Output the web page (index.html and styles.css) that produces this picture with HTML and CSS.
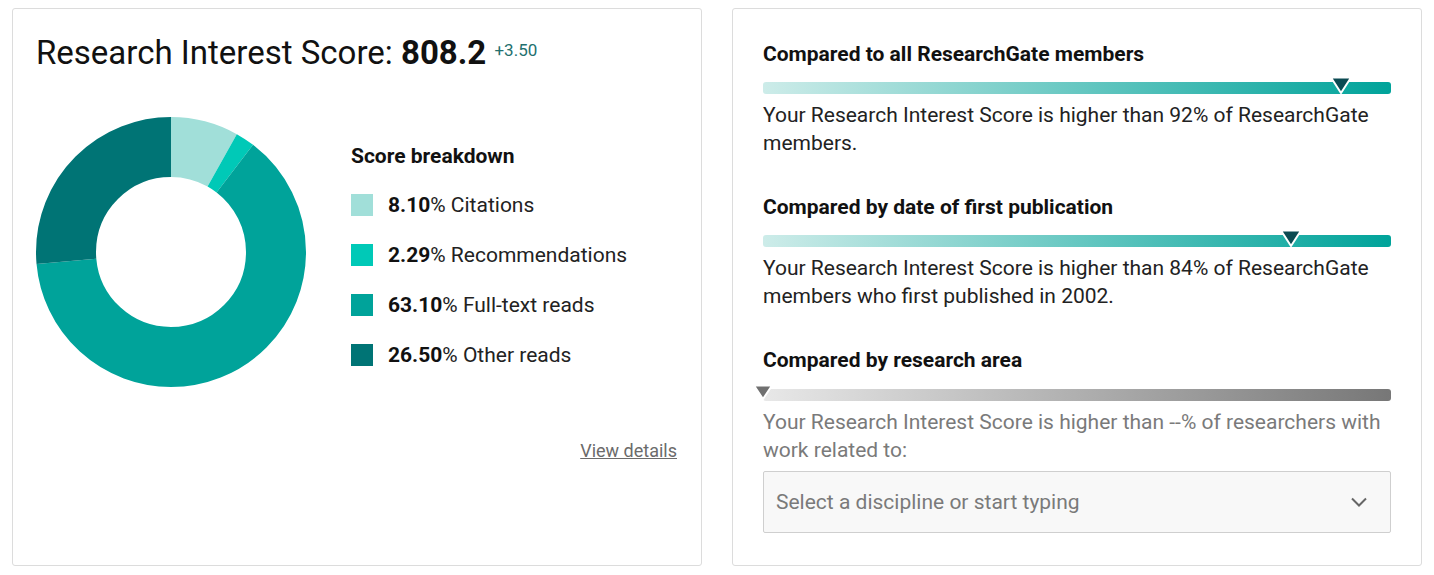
FILE: index.html
```html
<!DOCTYPE html>
<html>
    <head>
        <title>Research Interest Score</title>
        <link rel="stylesheet" href="styles.css">
    </head>
    <body>
      <div class="page">
        <!-- Score and breakdown -->
        <div class="card scoreCard">
          <h1 class="scoreTitle">Research Interest Score: <b>808.2</b> <span class="delta">+3.50</span></h1>
          <div class="scoreBody">
            <svg class="donut" width="270" height="270" viewBox="0 0 270 270">
              <g transform="rotate(-90 135 135)" fill="none" stroke-width="60">
                <circle cx="135" cy="135" r="105" stroke="#a1dfd9" stroke-dasharray="53.44 659.73" stroke-dashoffset="0"></circle>
                <circle cx="135" cy="135" r="105" stroke="#00c9b7" stroke-dasharray="15.11 659.73" stroke-dashoffset="-53.44"></circle>
                <circle cx="135" cy="135" r="105" stroke="#00a39a" stroke-dasharray="416.29 659.73" stroke-dashoffset="-68.55"></circle>
                <circle cx="135" cy="135" r="105" stroke="#007475" stroke-dasharray="174.89 659.73" stroke-dashoffset="-484.84"></circle>
              </g>
            </svg>
            <div class="legend">
              <h2 class="legendTitle">Score breakdown</h2>
              <ul class="legendList">
                <li><span class="swatch citations"></span><span><b>8.10</b>% Citations</span></li>
                <li><span class="swatch recommendations"></span><span><b>2.29</b>% Recommendations</span></li>
                <li><span class="swatch fulltext"></span><span><b>63.10</b>% Full-text reads</span></li>
                <li><span class="swatch other"></span><span><b>26.50</b>% Other reads</span></li>
              </ul>
            </div>
          </div>
          <div class="detailsRow"><a href="#" class="detailsLink">View details</a></div>
        </div>

        <!-- Comparisons -->
        <div class="card compareCard">
          <div class="compare">
            <h3 class="compareTitle">Compared to all ResearchGate members</h3>
            <div class="bar teal">
              <svg class="marker" style="left: 92%" width="24" height="19" viewBox="0 0 24 19"><polygon points="2,1.5 22,1.5 12,17" fill="#0b4a52" stroke="#fff" stroke-width="2" stroke-linejoin="round"></polygon></svg>
            </div>
            <p class="compareText">Your Research Interest Score is higher than 92% of ResearchGate members.</p>
          </div>
          <div class="compare">
            <h3 class="compareTitle">Compared by date of first publication</h3>
            <div class="bar teal">
              <svg class="marker" style="left: 84%" width="24" height="19" viewBox="0 0 24 19"><polygon points="2,1.5 22,1.5 12,17" fill="#0b4a52" stroke="#fff" stroke-width="2" stroke-linejoin="round"></polygon></svg>
            </div>
            <p class="compareText">Your Research Interest Score is higher than 84% of ResearchGate members who first published in 2002.</p>
          </div>
          <div class="compare">
            <h3 class="compareTitle">Compared by research area</h3>
            <div class="bar gray">
              <svg class="marker empty" style="left: 0%" width="22" height="17" viewBox="0 0 22 17"><polygon points="2,1.5 20,1.5 11,15" fill="#707070" stroke="#fff" stroke-width="2" stroke-linejoin="round"></polygon></svg>
            </div>
            <p class="compareText muted">Your Research Interest Score is higher than --% of researchers with work related to:</p>
            <div class="select">
              <span>Select a discipline or start typing</span>
              <svg width="18" height="12" viewBox="0 0 18 12"><polyline points="2,2.5 9,9.5 16,2.5" fill="none" stroke="#666" stroke-width="2"></polyline></svg>
            </div>
          </div>
        </div>
      </div>
    </body>
</html>
```

FILE: styles.css
```css
/* Include the padding and border in an element's total width and height */
* {
  box-sizing: border-box;
}

body {
  margin: 0;
  padding: 8px 12px;
  background: #fff;
  font-family: Roboto, "Liberation Sans", Arial, sans-serif;
  color: #111;
}

.page {
  display: flex;
  gap: 30px;
}

/* Cards */
.card {
  width: 690px;
  height: 558px;
  border: 1px solid #dcdcdc;
  border-radius: 3px;
  background: #fff;
}

.scoreCard {
  padding: 21px 24px 0 23px;
}

.compareCard {
  padding: 31px 30px 0 30px;
  display: flex;
  flex-direction: column;
  gap: 36px;
}

/* Title */
.scoreTitle {
  margin: 0;
  font-size: 33px;
  font-weight: 400;
  line-height: 40px;
}

.scoreTitle b {
  font-weight: 700;
}

.delta {
  font-size: 17px;
  color: #23706e;
  vertical-align: 8px;
}

/* Donut and legend */
.scoreBody {
  display: flex;
  gap: 45px;
  margin-top: 44px;
}

.donut {
  display: block;
  flex: none;
}

.legend {
  padding-top: 25px;
}

.legendTitle {
  margin: 0 0 21px 0;
  font-size: 21px;
  font-weight: 700;
  line-height: 28px;
}

.legendList {
  margin: 0;
  padding: 0;
  list-style: none;
  display: flex;
  flex-direction: column;
  gap: 22px;
}

.legendList li {
  display: flex;
  align-items: center;
  gap: 15px;
  font-size: 21px;
  line-height: 28px;
  color: #222;
}

.legendList b {
  color: #111;
}

.swatch {
  width: 22px;
  height: 22px;
  flex: none;
}

.citations { background: #a1dfd9; }
.recommendations { background: #00c9b7; }
.fulltext { background: #00a39a; }
.other { background: #007475; }

.detailsRow {
  margin-top: 52px;
  text-align: right;
  line-height: 24px;
}

.detailsLink {
  font-size: 18px;
  color: #6b6b6b;
  text-decoration: underline;
}

/* Comparison bars */
.compareTitle {
  margin: 0;
  font-size: 21px;
  font-weight: 700;
  line-height: 28px;
}

.bar {
  position: relative;
  height: 12px;
  margin-top: 14px;
  border-radius: 3px;
}

.bar.teal {
  background: linear-gradient(to right, #cdece9, #00a39a);
}

.bar.gray {
  margin-top: 15px;
  background: linear-gradient(to right, #e8e8e8, #777);
}

/* Marker sits over the bar */
.marker {
  position: absolute;
  top: -6px;
  transform: translateX(-50%);
}

.marker.empty {
  top: -5px;
}

.compareText {
  margin: 7px 0 0 0;
  font-size: 21px;
  line-height: 28px;
  color: #222;
}

.compareText.muted {
  color: #7a7a7a;
}

/* Discipline select */
.select {
  margin-top: 7px;
  height: 62px;
  border: 1px solid #cfcfcf;
  border-radius: 2px;
  background: #f8f8f8;
  display: flex;
  align-items: center;
  justify-content: space-between;
  padding: 0 22px 0 12px;
  font-size: 21px;
  color: #7a7a7a;
}
```
